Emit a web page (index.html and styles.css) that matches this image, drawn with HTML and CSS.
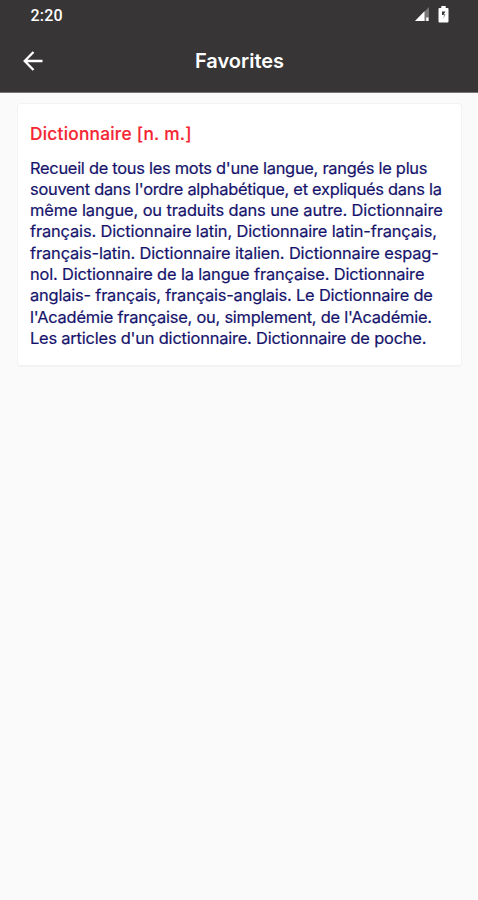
FILE: index.html
```html
<!DOCTYPE html>
<html lang="fr">
<head>
<meta charset="utf-8">
<title>Favorites</title>
<link rel="stylesheet" href="styles.css">
</head>
<body>
<header class="top">
  <div class="status">
    <span class="clock">2:20</span>
    <span class="indicators">
      <svg class="signal" viewBox="0 0 16 15"><path d="M15 0v14H1z" fill="#777576"/><path d="M10.500 4.200V14H1z" fill="#fff"/><path d="M12.200 10.500h2.300V14h-2.300z" fill="#fff"/></svg>
      <svg class="battery" viewBox="0 0 11 17"><path d="M3.300 0h4.400v2H9.500a1 1 0 0 1 1 1v12.500a1 1 0 0 1-1 1h-8a1 1 0 0 1-1-1V3a1 1 0 0 1 1-1h1.800z" fill="#fff"/><path d="M7.500 5.500H4v3.500h2.500L4.800 13 7.500 8.500H5.500z" fill="#373535"/></svg>
    </span>
  </div>
  <div class="bar">
    <svg class="back" viewBox="0 0 20 20"><path d="M19.500 10H2M10.500 1L1.700 10l8.800 9" fill="none" stroke="#fff" stroke-width="2.300"/></svg>
    <h1 class="title">Favorites</h1>
  </div>
</header>
<main class="content">
  <article class="card">
    <h2 class="word">Dictionnaire [n. m.]</h2>
    <p class="definition">
      <span class="line l1">Recueil de tous les mots d'une langue, rangés le plus</span>
      <span class="line l2">souvent dans l'ordre alphabétique, et expliqués dans la</span>
      <span class="line l3">même langue, ou traduits dans une autre. Dictionnaire</span>
      <span class="line l4">français. Dictionnaire latin, Dictionnaire latin-français,</span>
      <span class="line l5">français-latin. Dictionnaire italien. Dictionnaire espag-</span>
      <span class="line l6">nol. Dictionnaire de la langue française. Dictionnaire</span>
      <span class="line l7">anglais- français, français-anglais. Le Dictionnaire de</span>
      <span class="line l8">l'Académie française, ou, simplement, de l'Académie.</span>
      <span class="line l9">Les articles d'un dictionnaire. Dictionnaire de poche.</span>
    </p>
  </article>
</main>
</body>
</html>
```
FILE: styles.css
```css
body { margin: 0; min-height: 900px; background: #fafafa; font-family: Inter, "Liberation Sans", sans-serif; }
.top { height: 93px; background: #373535; border-bottom: 1px solid #747373; box-sizing: border-box; color: #fff; }
.status { display: flex; justify-content: space-between; align-items: center; height: 31px; padding: 0 29px 0 30.5px; }
.clock { font: 500 16px/31px Roboto, sans-serif; letter-spacing: 0.2px; }
.indicators { display: flex; align-items: center; gap: 8px; margin-top: -2px; }
.signal { width: 16px; height: 15px; }
.battery { width: 11px; height: 17px; }
.bar { display: grid; grid-template-columns: 56px 1fr 56px; align-items: center; height: 60px; }
.back { width: 20px; height: 20px; margin-left: 23px; }
.title { margin: 0; padding-left: 1px; text-align: center; font-size: 20px; font-weight: 600; }
.content { padding: 10px 16px 0 17px; }
.card { height: 264px; box-sizing: border-box; padding: 18px 12px 0; background: #fff; border: 1px solid #f3f3f3; border-bottom-width: 2px; border-radius: 4px; }
.word { margin: 0; color: #f52533; font-size: 17.3px; line-height: 24px; font-weight: 500; letter-spacing: 0.24px; -webkit-text-stroke: 0.15px #f52533; }
.definition { margin: 11.5px 0 0; color: #15136b; font-size: 16.4px; line-height: 21.3px; -webkit-text-stroke: 0.2px #15136b; }
.line { display: block; white-space: nowrap; }
.l1 { letter-spacing: -0.262px; }
.l2 { letter-spacing: -0.264px; }
.l3 { letter-spacing: -0.1px; }
.l4 { letter-spacing: -0.126px; }
.l5 { letter-spacing: -0.123px; }
.l6 { letter-spacing: -0.146px; }
.l7 { letter-spacing: -0.182px; }
.l8 { letter-spacing: -0.212px; }
.l9 { letter-spacing: -0.187px; }
```
